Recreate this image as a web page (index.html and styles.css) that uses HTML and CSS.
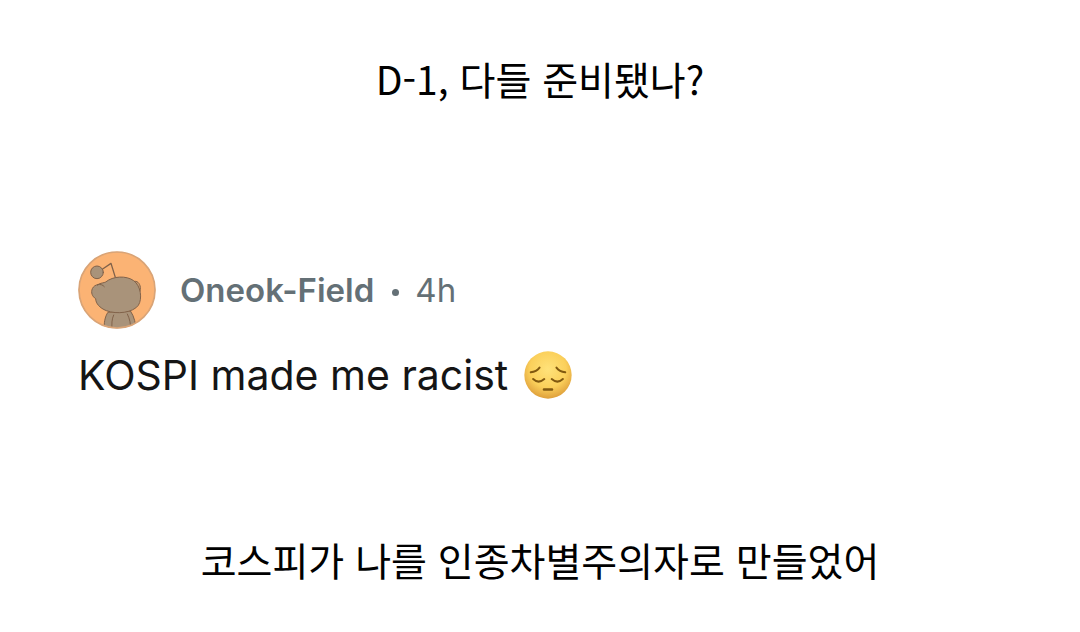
FILE: index.html
```html
<!DOCTYPE html>
<html lang="ko">
<head>
  <meta charset="UTF-8">
  <meta name="viewport" content="width=device-width, initial-scale=1.0">
  <title>D-1, 다들 준비됐나?</title>
  <link rel="stylesheet" href="styles.css">
</head>
<body>
  <main class="post">
    <p class="caption">D-1, 다들 준비됐나?</p>

    <article class="comment" lang="en">
      <header class="comment-header">
        <svg class="avatar" viewBox="23 33 234 234" aria-hidden="true">
          <defs>
            <clipPath id="avatar-clip">
              <circle cx="140" cy="150" r="115"/>
            </clipPath>
          </defs>
          <circle cx="140" cy="150" r="115" fill="#fbb374"/>
          <g clip-path="url(#avatar-clip)" stroke="#80624a" stroke-width="3" stroke-linecap="round" stroke-linejoin="round">
            <path d="M112 218 C104 230 100 248 102 275 H198 C196 250 192 230 181 214 Z" fill="#a9937a"/>
            <path d="M130 225 C124 238 124 252 125 270 M171 222 C179 238 181 252 181 270" fill="none"/>
            <path d="M189 125 C200 120 209 130 210 142 C211 151 208 158 203 163 Z" fill="#c79b70"/>
            <path d="M97 87 L122 70 L135 112" fill="none" stroke-width="4"/>
            <circle cx="80" cy="97" r="19" fill="#a9937a"/>
            <path d="M82 134 C92 128 101 129 106 126 C128 108 168 106 190 122 C211 137 217 176 204 196 C188 218 140 224 108 212 C88 204 76 190 76 176 C66 170 61 158 66 146 C70 138 76 135 82 134 Z" fill="#a9937a"/>
            <path d="M82 134 C90 132 97 134 102 140" fill="none"/>
          </g>
          <circle cx="140" cy="150" r="114" fill="none" stroke="#d9a477" stroke-width="5"/>
        </svg>
        <a class="author" href="#">Oneok-Field</a>
        <span class="dot"></span>
        <time class="age">4h</time>
      </header>
      <p class="comment-text">
        <span>KOSPI made me racist</span>
        <svg class="emoji" viewBox="44 30 142 142" role="img" aria-label="pensive face">
          <defs>
            <radialGradient id="face" cx="50%" cy="38%" r="64%">
              <stop offset="0" stop-color="#ffe27a"/>
              <stop offset="0.6" stop-color="#fbd05b"/>
              <stop offset="1" stop-color="#dc9b38"/>
            </radialGradient>
          </defs>
          <circle cx="115" cy="101" r="70" fill="url(#face)"/>
          <g fill="none" stroke="#805810" stroke-linecap="round" stroke-width="6">
            <path d="M64 93 Q81 91 90 79"/>
            <path d="M140 79 Q149 91 166 93"/>
            <path d="M71 113 Q87 128 104 113"/>
            <path d="M126 113 Q143 128 159 113"/>
            <path d="M103 144 H127" stroke-width="7"/>
          </g>
        </svg>
      </p>
    </article>

    <p class="caption">코스피가 나를 인종차별주의자로 만들었어</p>
  </main>
</body>
</html>
```
FILE: styles.css
```css
body {
  margin: 0;
  background: #fff;
  color: #000;
  font-family: "Noto Sans CJK KR", sans-serif;
}

.post {
  display: flex;
  flex-direction: column;
  padding: 48px 0 40px;
}

.caption {
  margin: 0;
  font-size: 39px;
  line-height: 60px;
  text-align: center;
}

.comment {
  margin: 143px 78px 129px;
  font-family: Inter, sans-serif;
}

.comment-header {
  display: flex;
  align-items: center;
  color: #647076;
  font-size: 33px;
  line-height: 40px;
}

.avatar {
  width: 78px;
  height: 78px;
  margin-right: 24px;
}

.author {
  color: inherit;
  font-weight: 600;
  text-decoration: none;
}

.dot {
  width: 7px;
  height: 7px;
  margin: 4px 16px 0 18px;
  border-radius: 50%;
  background: #647076;
}

.comment-text {
  display: flex;
  align-items: center;
  gap: 16px;
  margin: 21px 0 0;
  color: #151515;
  font-size: 41px;
  line-height: 50px;
}

.emoji {
  width: 48px;
  height: 48px;
}
```
